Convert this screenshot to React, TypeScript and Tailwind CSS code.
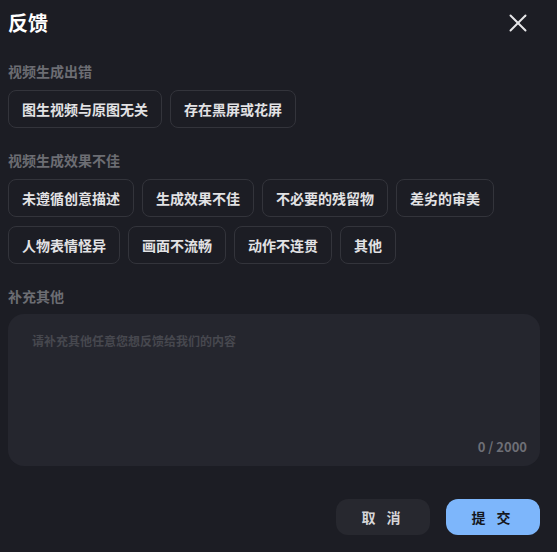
import { X } from 'lucide-react'

const groups = [
  { title: '视频生成出错', items: ['图生视频与原图无关', '存在黑屏或花屏'] },
  {
    title: '视频生成效果不佳',
    items: ['未遵循创意描述', '生成效果不佳', '不必要的残留物', '差劣的审美', '人物表情怪异', '画面不流畅', '动作不连贯', '其他'],
  },
]

function Chip({ label }: { label: string }) {
  return (
    <button className="h-[38px] rounded-lg border border-[#33343b] bg-[#1c1d24] px-[13px] text-[14px] font-bold leading-none text-[#e2e2e4]">
      {label}
    </button>
  )
}

export default function App() {
  return (
    <div
      className="h-[552px] w-[557px] bg-[#1c1d24] pl-2 pr-[17px] pt-[11px]"
      style={{ fontFamily: '"Noto Sans CJK SC", "Noto Sans", sans-serif' }}
    >
      <div className="flex items-center justify-between">
        <h1 className="text-[20px] font-bold leading-[24px] text-white">反馈</h1>
        <X className="-my-2 mr-[7px] h-[30px] w-[30px] text-[#e6e6e8]" strokeWidth={1.6} />
      </div>

      {groups.map((g, i) => (
        <div key={g.title} className={i === 0 ? 'mt-[28px]' : 'mt-[24px]'}>
          <div className="text-[14px] font-bold leading-[16px] text-[#6c6d73]">{g.title}</div>
          <div className="mt-[11px] flex flex-wrap gap-x-2 gap-y-[9px]">
            {g.items.map((it) => (
              <Chip key={it} label={it} />
            ))}
          </div>
        </div>
      ))}

      <div className="mt-[24px] text-[14px] font-bold leading-[16px] text-[#6c6d73]">补充其他</div>
      <div className="relative mt-[10px] h-[152px] rounded-[16px] bg-[#25262e] px-6 pt-[19px]">
        <div className="text-[12px] font-bold leading-[16px] text-[#47484f]">请补充其他任意您想反馈给我们的内容</div>
        <div className="absolute bottom-[10px] right-[13px] text-[13px] font-bold text-[#6e6f76]">0 / 2000</div>
      </div>

      <div className="mt-[33px] flex justify-end gap-4">
        <button className="h-9 w-[94px] rounded-xl bg-[#27282f] text-[14px] font-bold tracking-[4px] text-[#d6d6d9]">取 消</button>
        <button className="h-9 w-[94px] rounded-xl bg-[#7db6fb] text-[14px] font-bold tracking-[4px] text-[#16181d]">提 交</button>
      </div>
    </div>
  )
}
